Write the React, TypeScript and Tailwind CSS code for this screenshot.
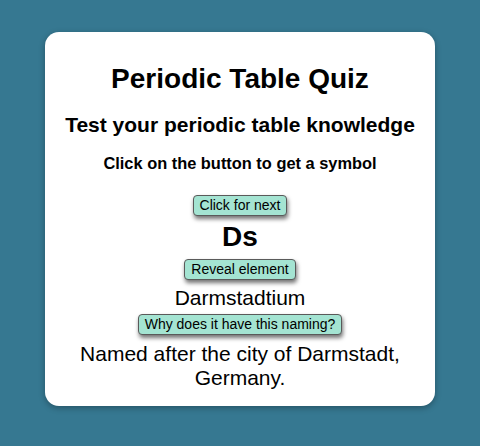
const QuizButton = ({ label }: { label: string }) => (
  <button className="block rounded-[4px] border border-[#5a5a5a] bg-[#a4e4d2] px-[6px] py-[2px] text-[14px] leading-[15px] text-black shadow-[1px_3px_4px_rgba(0,0,0,0.55)]">
    {label}
  </button>
);

const App = () => {
  return (
    <div className="flex min-h-[446px] w-full justify-center bg-[#367891] pt-[32px] font-['Liberation_Sans',Arial,sans-serif]">
      <div className="flex h-[374px] w-[390px] flex-col items-center rounded-[14px] bg-white px-4 pt-[31px] text-center text-black shadow-[0_2px_6px_rgba(0,0,0,0.3)]">
        <h1 className="text-[28px] font-bold leading-[32px]">Periodic Table Quiz</h1>
        <h2 className="mt-[18px] text-[21px] font-bold leading-[24px]">Test your periodic table knowledge</h2>
        <h3 className="mt-[17px] text-[16.4px] font-bold leading-[19px]">Click on the button to get a symbol</h3>
        <div className="mt-[22px] flex">
          <QuizButton label="Click for next" />
        </div>
        <p className="mt-[5px] text-[28px] font-bold leading-[32px]">Ds</p>
        <div className="mt-[6px] flex">
          <QuizButton label="Reveal element" />
        </div>
        <p className="mt-[6px] text-[21px] leading-[24px]">Darmstadtium</p>
        <div className="mt-[4px] flex">
          <QuizButton label="Why does it have this naming?" />
        </div>
        <p className="mt-[7px] text-[21px] leading-[24px]">Named after the city of Darmstadt, Germany.</p>
      </div>
    </div>
  );
};

export default App;
